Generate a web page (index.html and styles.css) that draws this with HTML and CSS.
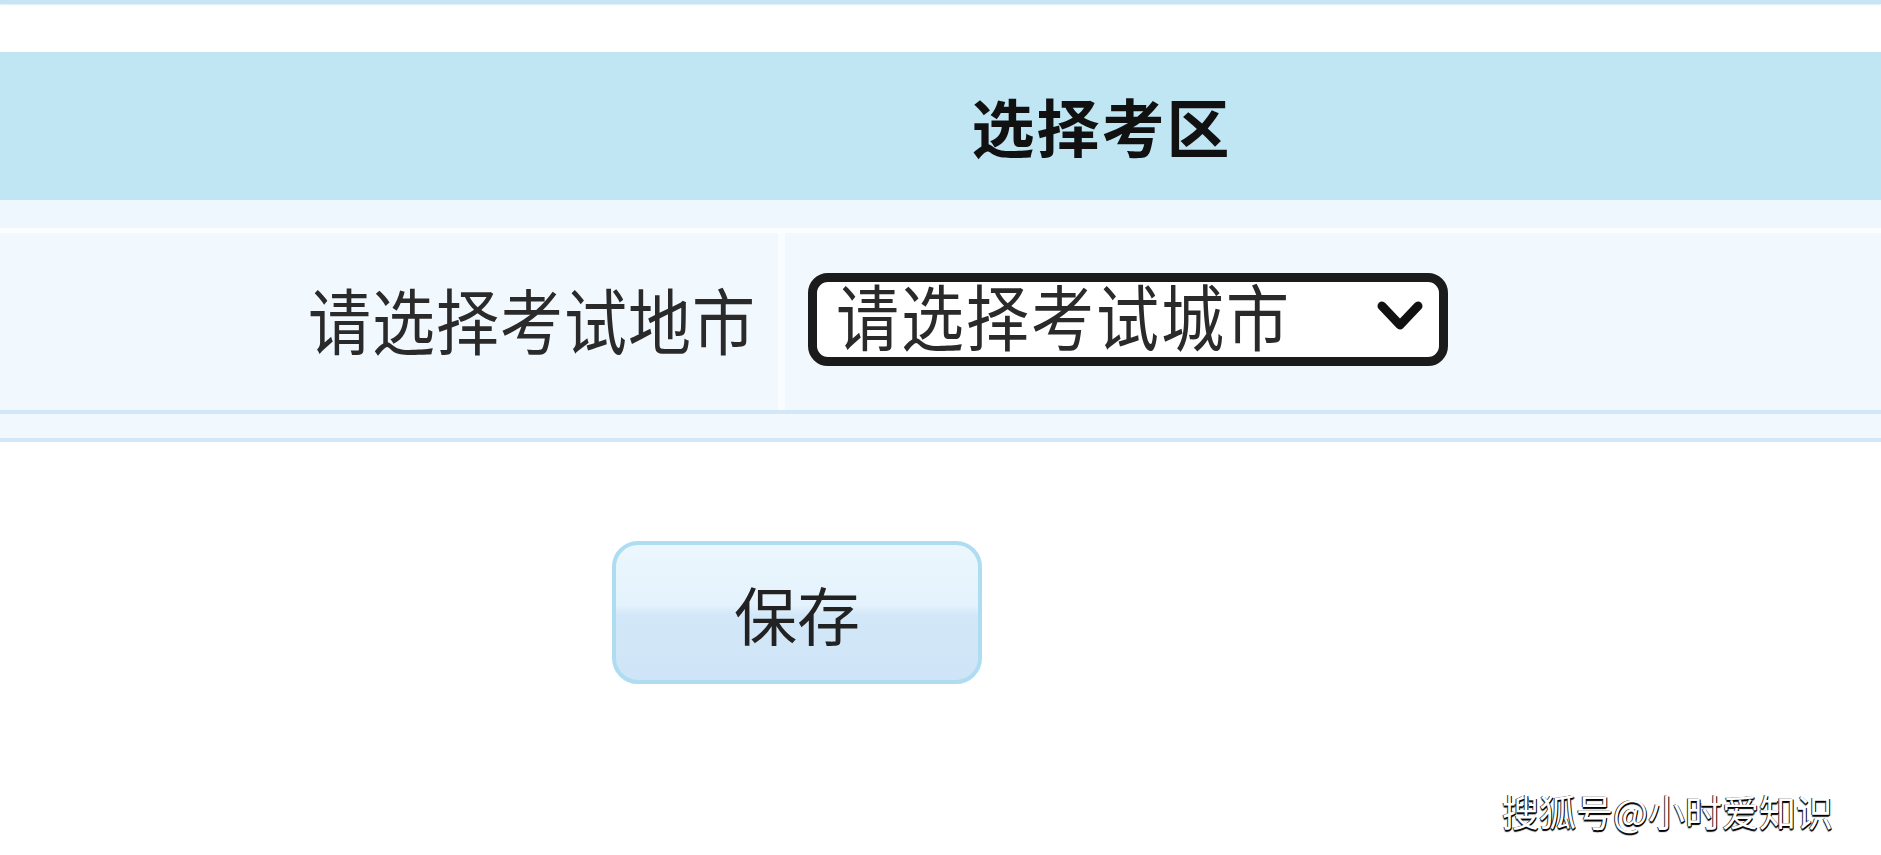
FILE: index.html
```html
<!DOCTYPE html>
<html lang="zh-CN">
<head>
<meta charset="utf-8">
<title>选择考区</title>
<link rel="stylesheet" href="styles.css">
</head>
<body>
<div class="topline"></div>
<div class="panel">
  <div class="header"><span class="title">选择考区</span></div>
  <div class="sub"></div>
  <div class="row">
    <div class="label"><span class="label-text">请选择考试地市</span></div>
    <div class="value">
      <div class="select">
        <span class="select-text">请选择考试城市</span>
        <svg class="chev" width="46" height="32" viewBox="0 0 46 32"><path d="M5 6 L23 25 L41 6" fill="none" stroke="#111" stroke-width="9" stroke-linecap="round" stroke-linejoin="round"/></svg>
      </div>
    </div>
  </div>
  <div class="line"></div>
  <div class="pale"></div>
  <div class="line"></div>
</div>
<div class="actions">
  <button class="btn">保存</button>
</div>
<div class="watermark">搜狐号@小时爱知识</div>
</body>
</html>
```
FILE: styles.css
```css
html, body {
  margin: 0;
  padding: 0;
}
body {
  width: 1881px;
  height: 855px;
  overflow: hidden;
  background: #ffffff;
  font-family: "Noto Sans CJK SC", "Noto Sans", sans-serif;
  position: relative;
}
.topline {
  height: 4px;
  background: #c6e5f4;
  box-shadow: 0 1px 2px #d9eff9;
}
.panel {
  margin-top: 48px;
}
.header {
  height: 148px;
  background: #c0e6f4;
  display: flex;
  align-items: center;
  justify-content: center;
  padding-left: 320px;
}
.title {
  font-size: 63px;
  font-weight: 700;
  color: #111;
  line-height: 1;
  letter-spacing: 2px;
  margin-right: -2px;
  margin-top: -4px;
}
.sub {
  height: 28px;
  background: #eef7fd;
  border-bottom: 5px solid #fbfdff;
}
.row {
  display: flex;
  height: 177px;
  background: #f1f8fe;
}
.label {
  width: 755px;
  padding-right: 23px;
  border-right: 7px solid #fafdff;
  display: flex;
  align-items: center;
  justify-content: flex-end;
}
.label-text {
  display: inline-block;
  font-size: 63px;
  line-height: 1;
  letter-spacing: 1px;
  margin-right: -1px;
  color: #2a2a2a;
  transform: scaleY(1.13);
  margin-top: -8px;
}
.value {
  flex: 1;
  display: flex;
  align-items: center;
  padding-left: 23px;
}
.select {
  box-sizing: border-box;
  width: 640px;
  height: 93px;
  border: 9px solid #1b1b1b;
  border-radius: 20px;
  background: #ffffff;
  display: flex;
  align-items: center;
  justify-content: space-between;
  padding-left: 19px;
  padding-right: 16px;
  margin-top: -5px;
}
.select-text {
  display: inline-block;
  font-size: 63px;
  line-height: 1;
  letter-spacing: 2px;
  color: #2a2a2a;
  transform: scaleY(1.13);
  margin-top: -12px;
}
.chev {
  display: block;
  margin-top: -6px;
}
.line {
  height: 4px;
  background: #d2e7f7;
}
.pale {
  height: 24px;
  background: #f1f8fe;
}
.actions {
  padding-left: 612px;
  margin-top: 99px;
}
.btn {
  width: 370px;
  height: 143px;
  border: 4px solid #aedcf1;
  border-radius: 26px;
  background: linear-gradient(to bottom, #ecf7fd 0%, #e3f2fc 45%, #d2e7f8 52%, #cfe5f7 100%);
  font-family: "Noto Sans CJK SC", "Noto Sans", sans-serif;
  font-size: 63px;
  line-height: 1;
  color: #222;
  padding: 0;
  display: flex;
  align-items: center;
  justify-content: center;
}
.watermark {
  position: absolute;
  left: 1502px;
  top: 791px;
  font-size: 37px;
  line-height: 1.1;
  color: #ffffff;
  text-shadow: 1px 1px 0 #000, -1px 0 0 #333, 0 2px 1px #000;
  white-space: nowrap;
}
```
